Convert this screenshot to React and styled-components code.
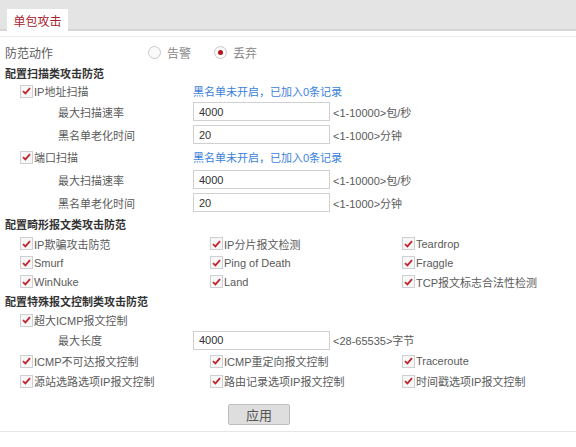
import styled, { createGlobalStyle } from 'styled-components';

const GlobalStyle = createGlobalStyle`
  html, body {
    margin: 0;
    padding: 0;
    background: #fff;
  }
  body {
    font-family: "Liberation Sans", "Noto Sans CJK SC", sans-serif;
    font-size: 11px;
    color: #5a5a5a;
  }
`;

const TabBar = styled.div`
  height: 29px;
  background: #e4e4e4;
  border-bottom: 2px solid #d6d6d6;
  display: flex;
  align-items: flex-end;
  padding-left: 7px;
`;

const Tab = styled.div`
  width: 61px;
  height: 22px;
  margin-bottom: -2px;
  background: #fff;
  color: #a8232e;
  font-size: 12px;
  display: flex;
  align-items: center;
  justify-content: center;
`;

const Divider = styled.div`
  height: 1px;
  margin-top: 5px;
  background: #ebebeb;
`;

const Content = styled.div`
  padding: 5px 0 0 5px;
`;

const Row = styled.div`
  display: flex;
  align-items: center;
  height: ${(p) => p.$h || 20}px;
`;

const ActionLabel = styled.div`
  width: 143px;
  font-size: 12px;
  color: #5a5a5a;
`;

const RadioItem = styled.label`
  display: flex;
  align-items: center;
  gap: 6px;
  margin-right: 23px;
  color: #888;
  font-size: 12px;
`;

const RadioCircle = styled.span`
  width: 11px;
  height: 11px;
  border-radius: 50%;
  border: 1px solid #c8c8c8;
  background: #fafafa;
  display: flex;
  align-items: center;
  justify-content: center;
  &::after {
    content: '';
    width: 5px;
    height: 5px;
    border-radius: 50%;
    background: ${(p) => (p.$on ? '#b3151f' : 'transparent')};
  }
`;

const SectionTitle = styled.div`
  font-weight: bold;
  color: #333;
  font-size: 11px;
`;

const CheckCell = styled.label`
  display: flex;
  align-items: center;
  gap: 1px;
  width: ${(p) => p.$w || 'auto'};
  padding-left: ${(p) => p.$indent || 0}px;
  box-sizing: border-box;
  color: #5a5a5a;
`;

const Box = styled.span`
  width: 11px;
  height: 11px;
  border: 1px solid #cfcfcf;
  background: #f7f7f7;
  display: flex;
  align-items: center;
  justify-content: center;
  flex-shrink: 0;
`;

const Hint = styled.span`
  color: #3b7fdc;
`;

const FieldLabel = styled.div`
  width: 188px;
  padding-left: 53px;
  box-sizing: border-box;
  color: #5a5a5a;
`;

const Input = styled.input`
  width: 137px;
  height: 19px;
  box-sizing: border-box;
  border: 1px solid #d0d0d0;
  padding: 0 5px;
  font-family: "Liberation Sans", "Noto Sans CJK SC", sans-serif;
  font-size: 11px;
  color: #333;
  outline: none;
`;

const Range = styled.span`
  margin-left: 3px;
  color: #5a5a5a;
`;

const Grid = styled.div`
  display: grid;
  grid-template-columns: 190px 192px 1fr;
  grid-auto-rows: ${(p) => p.$h || 19}px;
  align-items: center;
  padding-left: 15px;
`;

const ButtonRow = styled.div`
  padding: 13px 0 6px 228px;
  border-bottom: 1px solid #e6e6e6;
`;

const Button = styled.button`
  width: 62px;
  height: 21px;
  background: #dedede;
  border: 1px solid #bdbdbd;
  border-radius: 2px;
  color: #555;
  font-family: "Liberation Sans", "Noto Sans CJK SC", sans-serif;
  font-size: 13px;
  padding: 0;
`;

const Check = () => (
  <Box>
    <svg width="9" height="8" viewBox="0 0 9 8">
      <path d="M1 4.2 L3.4 6.4 L8 1.2" fill="none" stroke="#c0262f" strokeWidth="1.8" />
    </svg>
  </Box>
);

const CheckItem = ({ label, w, indent }) => (
  <CheckCell $w={w} $indent={indent}>
    <Check />
    {label}
  </CheckCell>
);

const Field = ({ label, value, range, h = 23 }) => (
  <Row $h={h}>
    <FieldLabel>{label}</FieldLabel>
    <Input defaultValue={value} />
    <Range>{range}</Range>
  </Row>
);

const malformed = [
  'IP欺骗攻击防范', 'IP分片报文检测', 'Teardrop',
  'Smurf', 'Ping of Death', 'Fraggle',
  'WinNuke', 'Land', 'TCP报文标志合法性检测',
];

const special = [
  'ICMP不可达报文控制', 'ICMP重定向报文控制', 'Traceroute',
  '源站选路选项IP报文控制', '路由记录选项IP报文控制', '时间戳选项IP报文控制',
];

export default function App() {
  return (
    <>
      <GlobalStyle />
      <TabBar>
        <Tab>单包攻击</Tab>
      </TabBar>
      <Divider />
      <Content>
        <Row $h={21}>
          <ActionLabel>防范动作</ActionLabel>
          <RadioItem><RadioCircle />告警</RadioItem>
          <RadioItem><RadioCircle $on />丢弃</RadioItem>
        </Row>
        <Row $h={19}><SectionTitle>配置扫描类攻击防范</SectionTitle></Row>
        <Row $h={18}>
          <CheckItem label="IP地址扫描" w="188px" indent={15} />
          <Hint>黑名单未开启，已加入0条记录</Hint>
        </Row>
        <Field label="最大扫描速率" value="4000" range="<1-10000>包/秒" />
        <Field label="黑名单老化时间" value="20" range="<1-1000>分钟" />
        <Row $h={22}>
          <CheckItem label="端口扫描" w="188px" indent={15} />
          <Hint>黑名单未开启，已加入0条记录</Hint>
        </Row>
        <Field label="最大扫描速率" value="4000" range="<1-10000>包/秒" />
        <Field label="黑名单老化时间" value="20" range="<1-1000>分钟" />
        <Row $h={20}><SectionTitle>配置畸形报文类攻击防范</SectionTitle></Row>
        <Grid $h={19}>
          {malformed.map((m) => <CheckItem key={m} label={m} />)}
        </Grid>
        <Row $h={20}><SectionTitle>配置特殊报文控制类攻击防范</SectionTitle></Row>
        <Row $h={18}>
          <CheckItem label="超大ICMP报文控制" indent={15} />
        </Row>
        <Field label="最大长度" value="4000" range="<28-65535>字节" h={22} />
        <Grid $h={20}>
          {special.map((m) => <CheckItem key={m} label={m} />)}
        </Grid>
      </Content>
      <ButtonRow>
        <Button>应用</Button>
      </ButtonRow>
    </>
  );
}
